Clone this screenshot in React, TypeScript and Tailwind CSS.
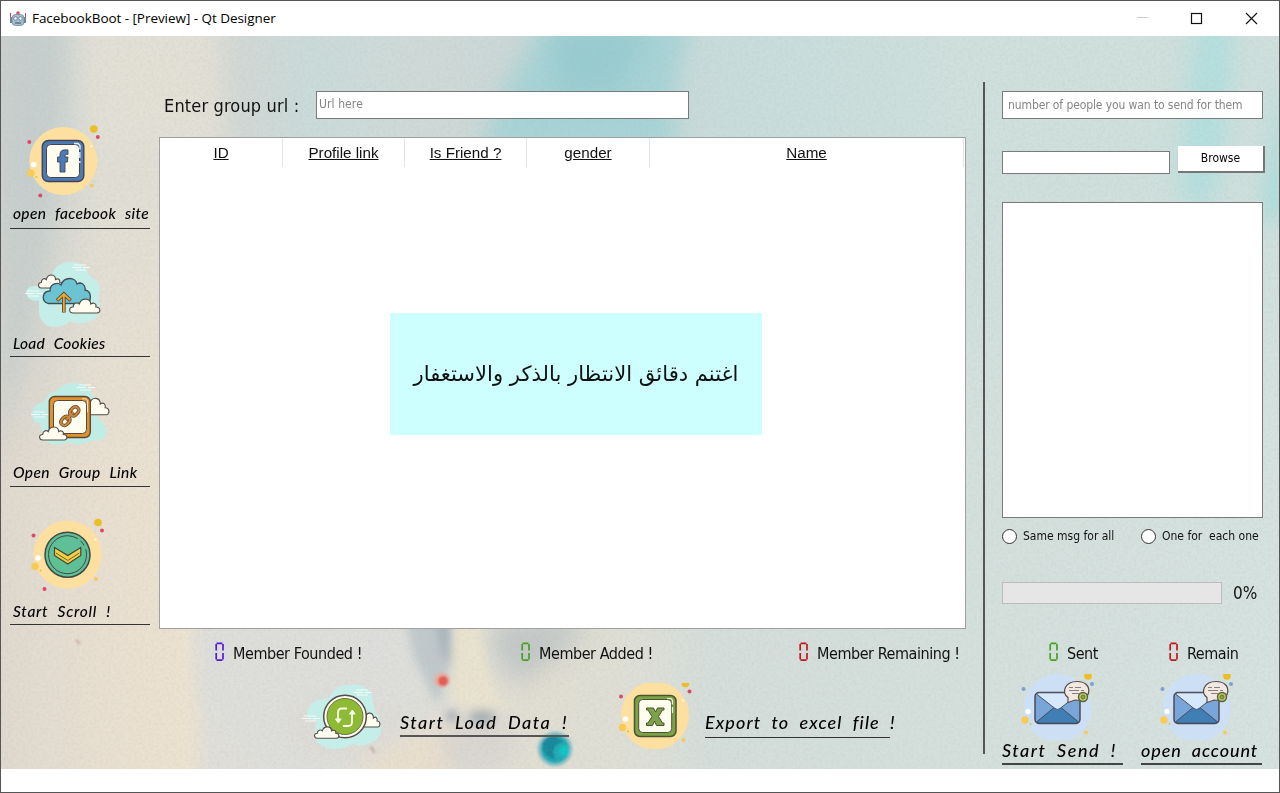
import React from "react";

const tahoma = "font-['DejaVu_Sans_Condensed','DejaVu_Sans',sans-serif] [font-stretch:condensed]";
const script = "font-['Lato',sans-serif] italic font-medium text-black whitespace-pre [word-spacing:5px]";

function Backdrop() {
  return (
    <svg className="absolute inset-0 h-full w-full" viewBox="1 36 1278 733" preserveAspectRatio="none">
      <defs>
        <linearGradient id="base" x1="0" x2="1" y1="0" y2="0">
          <stop offset="0" stopColor="#d0d3cf" />
          <stop offset="0.035" stopColor="#ced5d2" />
          <stop offset="0.08" stopColor="#e0dfd6" />
          <stop offset="0.15" stopColor="#e1dfd6" />
          <stop offset="0.19" stopColor="#d1d8d5" />
          <stop offset="0.24" stopColor="#cadbda" />
          <stop offset="0.33" stopColor="#cfdad8" />
          <stop offset="0.4" stopColor="#cbd8d7" />
          <stop offset="0.6" stopColor="#c8dddc" />
          <stop offset="0.75" stopColor="#cfe0dd" />
          <stop offset="1" stopColor="#cfe0dd" />
        </linearGradient>
        <linearGradient id="low" x1="0" x2="1" y1="0" y2="0">
          <stop offset="0" stopColor="#dfd9cf" />
          <stop offset="0.07" stopColor="#e8dfd1" />
          <stop offset="0.145" stopColor="#ece2d0" />
          <stop offset="0.165" stopColor="#e0dfda" />
          <stop offset="0.3" stopColor="#dfe0dc" />
          <stop offset="0.42" stopColor="#e1ded2" />
          <stop offset="0.5" stopColor="#dedfd6" />
          <stop offset="0.56" stopColor="#d4dedb" />
          <stop offset="1" stopColor="#d5e2df" />
        </linearGradient>
        <linearGradient id="fade" x1="0" x2="0" y1="0" y2="1">
          <stop offset="0.15" stopColor="#000" />
          <stop offset="0.6" stopColor="#fff" />
        </linearGradient>
        <mask id="lowMask"><rect x="0" y="36" width="1280" height="733" fill="url(#fade)" /></mask>
        <filter id="b4" x="-50%" y="-50%" width="200%" height="200%"><feGaussianBlur stdDeviation="5" /></filter>
        <filter id="b12" x="-50%" y="-50%" width="200%" height="200%"><feGaussianBlur stdDeviation="12" /></filter>
        <filter id="b1" x="-50%" y="-50%" width="200%" height="200%"><feGaussianBlur stdDeviation="1.2" /></filter>
        <filter id="grain" x="0" y="0" width="100%" height="100%">
          <feTurbulence type="fractalNoise" baseFrequency="0.35" numOctaves="3" seed="4" />
          <feColorMatrix values="0 0 0 0 0.45  0 0 0 0 0.45  0 0 0 0 0.42  0.9 0 0 0 -0.36" />
        </filter>
      </defs>
      <rect x="0" y="36" width="1280" height="733" fill="url(#base)" />
      <rect x="0" y="36" width="1280" height="733" fill="url(#low)" mask="url(#lowMask)" />
      <g filter="url(#b12)">
        <path d="M0 20h65L58 160 40 300 0 460Z" fill="#c3cccc" opacity=".75" />
        <path d="M80 20h130L225 150H100Z" fill="#e3e0d6" opacity=".8" />
        <path d="M545 20H690L675 90 675 150H480L505 90Z" fill="#a6d3d6" />
        <path d="M550 20H650L620 90 560 100Z" fill="#8fc8cc" opacity=".65" />
        <path d="M1198 20H1232Q1232 130 1212 205H1182Q1180 130 1198 20Z" fill="#aadede" opacity=".8" />
        <path d="M1284 60V220H1266Z" fill="#92dadc" />
      </g>
      <circle cx="330" cy="650" r="138" fill="#dedfdc" opacity=".6" filter="url(#b4)" />
      <g filter="url(#b12)">
        <ellipse cx="345" cy="725" rx="60" ry="35" fill="#dddbd7" />
        <path d="M330 785 450 712 475 735 440 785Z" fill="#eadfcd" />
        <ellipse cx="475" cy="745" rx="38" ry="28" fill="#d9d5d0" />
        <path d="M500 620H590L570 645 520 685 490 650Z" fill="#b0bcc0" opacity=".65" />
      </g>
      <g filter="url(#b4)">
        <path d="M405 620H450V670L437 705 415 660Z" fill="#b5c0c5" opacity=".75" />
        <path d="M436 620H451V665L442 655Z" fill="#9facb5" opacity=".8" />
        <path d="M455 620H478L488 670 500 700 520 706 470 710 450 700Z" fill="#e8e2ce" />
        <circle cx="452" cy="716" r="5" fill="#8d9ca6" />
        <ellipse cx="482" cy="717" rx="13" ry="7" fill="#a4adb3" />
      </g>
      <g filter="url(#b1)">
        <ellipse cx="442" cy="680" rx="8" ry="7.500" fill="#e5b0a6" />
        <ellipse cx="443" cy="681" rx="5" ry="5" fill="#e35a51" />
        <circle cx="555" cy="749" r="17.500" fill="#93c3c9" />
        <circle cx="555" cy="749" r="14.500" fill="#1eaab4" />
        <path d="M542 743q10-14 22 0q-14-1-9 17q-12-3-13-17Z" fill="#167b94" opacity=".75" />
        <circle cx="564" cy="751" r="5" fill="#11c4c5" />
        <path d="M370 747q4 2 4 6M76 640l4 4" stroke="#cbb5ab" strokeWidth="3" />
      </g>
      <rect x="0" y="36" width="1280" height="733" filter="url(#grain)" opacity=".36" />
    </svg>
  );
}

function Cloud({ x, y, w, h, fill = "#fffcf0" }: { x: number; y: number; w: number; h: number; fill?: string }) {
  return (
    <path
      transform={`translate(${x} ${y}) scale(${w / 30} ${h / 16})`}
      d="M4 15C0 15-1 9 4 9C4 5 8 4 10 6C12-1 21 0 21 6C24 4 27 6 26 9C31 9 31 15 27 15Z"
      fill={fill}
      stroke="#564b48"
      strokeWidth="1.1"
      vectorEffect="non-scaling-stroke"
    />
  );
}

/* Soft disc with confetti dots, centred on 0,0 */
function Disc({ blue = false, bottomDot = true }: { blue?: boolean; bottomDot?: boolean }) {
  const dot = blue ? "#7f9fd0" : "#dc4a66";
  return (
    <g>
      <circle r="34" fill={blue ? "#cddff5" : "#fddf9f"} />
      <circle cx="-34" cy="-19" r="2" fill={dot} />
      <circle cx="34.500" cy="-24" r="2" fill={dot} />
      {!blue && bottomDot && <circle cx="-23" cy="34.500" r="2" fill={dot} />}
      <circle cx="30.500" cy="-32" r="3.800" fill="#edbd24" />
      <circle cx="-32.500" cy="12" r="3.800" fill="#f8cb59" />
      <circle cx="-27" cy="16" r="1" fill="#edbd24" />
      <circle cx="28.500" cy="24.500" r="2" fill="#f3ca62" />
      <circle cx="-29.500" cy="3.500" r="2.700" fill="#fff" />
      <circle cx="28" cy="-15" r="1.200" fill="#fff4d6" />
    </g>
  );
}

function Dashes({ x, y }: { x: number; y: number }) {
  return <path transform={`translate(${x} ${y})`} d="M2 0h12M0 2.500h9M11 2.500h7M3 5h11" stroke="#fff" strokeWidth=".8" />;
}

function FacebookIcon() {
  return (
    <svg className="h-[82px] w-[140px]" viewBox="10 120 140 82">
      <g transform="translate(63.3 161)"><Disc /></g>
      <rect x="42.300" y="140.500" width="41.500" height="41" rx="6" fill="#4a7ab8" stroke="#46434f" strokeWidth="1.400" />
      <rect x="46.500" y="144.500" width="33" height="33" rx="4" fill="#fffcf0" stroke="#46434f" strokeWidth="1" />
      <path d="M74 143.500h4l2 2v4M79.800 152v6M79.800 161v2" stroke="#e6f1ff" strokeWidth="1.300" fill="none" />
      <path d="M60 172V162h-2.500v-5H60v-2c0-4.800 3-5.500 8-5v4.500c-2.500-.2-3 .2-3 2.500h3l-.6 5H65v10Z" fill="#4a7ab8" stroke="#46434f" strokeWidth=".9" />
    </svg>
  );
}

function CookiesIcon() {
  return (
    <svg className="h-[82px] w-[140px]" viewBox="10 248 140 82">
      <path d="M39 300Q28 303 26 292Q27 285 38 286Q42 281 50 280Q54 262 71 262Q86 262 89 276Q100 280 100 290Q97 299 100 307Q98 321 87 322Q78 325 70 321Q64 327 53 327Q40 325 39 312Z" fill="#c6eee8" />
      <Dashes x={72} y={265} />
      <Dashes x={25} y={291} />
      <Cloud x={38} y={274} w={25} h={15} />
      <path d="M52 303.500H48C41 301 42 291 50 291C50 283 58 282 61 285C64 276 76 277 77 284C82 281 86 286 85 290C92 291 92 302 86 303.500Z" fill="#6cc4d3" stroke="#414b55" strokeWidth="1.300" />
      <Cloud x={69} y={298} w={31} h={16} />
      <path d="M63.800 312.500V295M57 300.500l6.800-6.500 6.800 6.500" fill="none" stroke="#4f4436" strokeWidth="3.600" />
      <path d="M63.800 312V294M57.500 300l6.300-6 6.300 6" fill="none" stroke="#eda92f" strokeWidth="1.900" />
    </svg>
  );
}

function LinkIcon() {
  return (
    <svg className="h-[82px] w-[140px]" viewBox="10 378 140 82">
      <path d="M49 394Q57 392 60 387Q74 379 87 386Q92 392 97 405Q95 420 106 426Q109 438 99 440Q92 440 87 442Q76 447 70 442Q52 449 43 438L40 423Q33 424 31 413Q36 402 44 402Z" fill="#bfece5" />
      <Dashes x={77} y={385} />
      <Dashes x={31} y={412} />
      <Cloud x={80} y={397} w={29} h={19} />
      <rect x="49.300" y="396.500" width="41" height="41" rx="5.500" fill="#e0922f" stroke="#5c4634" strokeWidth="1.400" />
      <rect x="53.500" y="400.500" width="33" height="33" rx="4" fill="#fffcf0" stroke="#5c4634" strokeWidth="1" />
      <path d="M82 398.800h4l1.500 1.500v12" stroke="#fff4dc" strokeWidth=".8" fill="none" />
      <g transform="translate(69.500 416.500) rotate(-47)" fill="none">
        <g stroke="#6b4a2b" strokeWidth="3.600"><rect x="-11" y="-3.500" width="10" height="7" rx="3.500" /><rect x="2" y="-3.500" width="10" height="7" rx="3.500" /><path d="M-5 0H6" /></g>
        <g stroke="#c98a40" strokeWidth="2"><rect x="-11" y="-3.500" width="10" height="7" rx="3.500" /><rect x="2" y="-3.500" width="10" height="7" rx="3.500" /><path d="M-5 0H6" /></g>
      </g>
      <Cloud x={39} y={426} w={28} h={15} />
    </svg>
  );
}

function ScrollIcon() {
  return (
    <svg className="h-[82px] w-[140px]" viewBox="10 516 140 82">
      <g transform="translate(67.500 554.500)"><Disc /></g>
      <circle cx="67.500" cy="554.700" r="22.500" fill="#5fbf97" stroke="#3e4a46" strokeWidth="1.500" />
      <circle cx="67.500" cy="554.700" r="19" fill="none" stroke="#3e4a46" strokeWidth="1" strokeDasharray="100 3 6 4" />
      <path d="M54.500 547.500l13.300 8 13-8v8l-13 8.500-13.300-8.500Z" fill="#f4cf42" stroke="#40453c" strokeWidth="1.200" />
      <path d="M56 553l11.800 7.500 11.500-7.500" fill="none" stroke="#40453c" strokeWidth=".8" />
    </svg>
  );
}

function RefreshIcon() {
  return (
    <svg className="h-[64px] w-[80px]" viewBox="302 685 80 64">
      <path d="M329 698Q335 685 350 684Q364 683 372 695Q373 705 375 712Q382 718 381 730Q381 739 370 743Q360 748 353 744Q342 751 327 748Q314 744 315 732L317 721Q307 721 307 714Q308 704 317 700Z" fill="#c6eee8" />
      <Dashes x={354} y={690} />
      <Dashes x={302} y={716} />
      <Cloud x={358} y={712} w={22} h={16} />
      <circle cx="345" cy="716.500" r="21.300" fill="#fffcf0" stroke="#564b48" strokeWidth="1.500" />
      <circle cx="345" cy="716.500" r="18" fill="#8fba35" stroke="#66783a" strokeWidth="1" />
      <g fill="none" stroke="#f7faea" strokeWidth="1.800">
        <path d="M347 708.500h-5q-4 0-4 4v9" /><path d="M343 726h5q4 0 4-4v-10" />
      </g>
      <path d="M335.500 719l2.800 4 2.800-4ZM349.500 714l2.800-4 2.800 4Z" fill="#f7faea" stroke="#f7faea" />
      <Cloud x={314} y={726} w={25} h={13} />
    </svg>
  );
}

function ExcelIcon() {
  return (
    <svg className="h-[66px] w-[80px]" viewBox="615 684 80 66">
      <g transform="translate(655 716.500)"><Disc bottomDot={false} /></g>
      <rect x="634.500" y="696.500" width="41.500" height="41" rx="5.500" fill="#7da348" stroke="#49532f" strokeWidth="1.500" />
      <rect x="638.700" y="700.500" width="33" height="33" rx="4" fill="#fffcf0" stroke="#49532f" strokeWidth="1" />
      <path d="M667 699.500h4l1.500 2v4M672.500 708v6" stroke="#e9f5d6" strokeWidth="1.200" fill="none" />
      <path d="M646.500 709h7l2 4 2-4h6.500v2h-1.500l-4 6.500 4 6.500h1.500v2.500h-7.500l-2-4.500-2 4.500h-6V724h1.500l4-6.500-4-6.500h-1.500Z" fill="#7da348" stroke="#49532f" strokeWidth="1" />
    </svg>
  );
}

function MailIcon() {
  return (
    <svg className="h-[66px] w-[80px]" viewBox="1018 674 80 66">
      <g transform="translate(1057.500 708)"><Disc blue /></g>
      <rect x="1035" y="692.500" width="45" height="31" rx="4" fill="#7aa5d8" stroke="#47434f" strokeWidth="1.400" />
      <path d="M1036.500 722l17-14q4-3 8 0l17 14q-2 1.500-4 1.200h-34q-2 0-4-1.200Z" fill="#407fb5" stroke="#47434f" strokeWidth=".9" />
      <path d="M1036.500 694q1-1.200 3-1.200h36q2 0 3 1.200l-18.500 14.500q-2.500 2-5 0Z" fill="#d6e8fb" stroke="#47434f" strokeWidth=".9" />
      <path d="M1068 702.500l0-5C1061 692 1065 681.500 1077 681.500C1086 681.500 1090 687 1088.500 693C1087 699 1081 701 1075 700Z" fill="#efe8e3" stroke="#5b4844" strokeWidth="1.200" />
      <path d="M1069 687.500h4M1075 687.500h6M1069 690.500h10M1081 690.500h3M1072 693.500h7" stroke="#6f6461" strokeWidth=".8" />
      <circle cx="1083" cy="697" r="4.500" fill="#bccc62" stroke="#586137" strokeWidth="1.400" />
      <circle cx="1083" cy="697" r="2" fill="#8aa23f" stroke="#586137" strokeWidth=".7" />
    </svg>
  );
}

/* Seven-segment zero */
function LcdZero({ color }: { color: string }) {
  return (
    <svg className="h-[20px] w-[9px] shrink-0" viewBox="0 0 9 20" fill="none" stroke={color} strokeWidth="1.700">
      <path d="M1.500 1.300h6M1.500 18.200h6M1.200 2v6.500M8 2v6.500M1.200 11V17.500M8 11V17.500" />
    </svg>
  );
}

function Counter({ color, label, className }: { color: string; label: string; className: string }) {
  return (
    <div className={`flex items-start gap-[9px] ${className}`}>
      <LcdZero color={color} />
      <span className={`${tahoma} whitespace-nowrap pt-[1px] text-[16px] leading-[22px] tracking-[-0.44px]`}>{label}</span>
    </div>
  );
}

function SideAction({ icon, label, className, spacing }: { icon: React.ReactNode; label: string; className: string; spacing: string }) {
  return (
    <div className={`flex w-[140px] flex-col justify-end border-b border-[#333] ${className}`}>
      {icon}
      <span className={`${script} block h-[26px] pl-[3px] text-[15.500px] leading-[24px] ${spacing}`}>{label}</span>
    </div>
  );
}

function TitleBar() {
  return (
    <header className="flex h-[35px] shrink-0 items-center bg-white pl-[8px]">
      <svg className="h-4 w-[18px]" viewBox="0 0 18 16">
        <path d="M1.500 2v6M16.500 2v6" stroke="#b04a57" strokeWidth="1" />
        <path d="M2 6v6M16 6v6" stroke="#6f8497" strokeWidth="2" />
        <circle cx="9" cy="2" r="1.800" fill="#d8505c" />
        <rect x="3" y="3.500" width="12" height="11" rx="3.500" fill="#a7bfd3" stroke="#71869a" strokeWidth=".8" />
        <circle cx="6.500" cy="7.500" r="1.800" fill="#e8f3fa" stroke="#586d80" strokeWidth=".7" />
        <circle cx="11.500" cy="7.500" r="1.800" fill="#e8f3fa" stroke="#586d80" strokeWidth=".7" />
        <path d="M6 12h6" stroke="#586d80" strokeWidth="1.400" />
      </svg>
      <span className="ml-[5px] font-['Open_Sans','Noto_Sans',sans-serif] text-[13.500px] tracking-[-0.05px] text-black">FacebookBoot - [Preview] - Qt Designer</span>
      <div className="ml-auto flex items-center pr-[21px]">
        <svg className="h-[13px] w-[122px]" viewBox="1136 11 122 13" fill="none">
          <path d="M1137 16.500h11" stroke="#ccc" />
          <rect x="1191.500" y="12.500" width="10" height="10" stroke="#111" strokeWidth="1.200" />
          <path d="M1246 12l11 11M1257 12l-11 11" stroke="#111" strokeWidth="1.100" />
        </svg>
      </div>
    </header>
  );
}

function Sidebar() {
  return (
    <nav className="flex w-[158px] shrink-0 flex-col pl-[9px]">
      <SideAction icon={<FacebookIcon />} label="open facebook site" className="h-[193px]" spacing="tracking-[0.3px] -mt-px mb-px" />
      <SideAction icon={<CookiesIcon />} label="Load Cookies" className="h-[128px]" spacing="tracking-[0.2px] pt-px" />
      <SideAction icon={<LinkIcon />} label="Open Group Link" className="h-[130px]" spacing="tracking-[0.35px]" />
      <SideAction icon={<ScrollIcon />} label="Start Scroll !" className="h-[138px]" spacing="tracking-[0.7px] pt-px" />
    </nav>
  );
}

const columns = [
  { title: "ID", width: "w-[123px]" },
  { title: "Profile link", width: "w-[122px]" },
  { title: "Is Friend ?", width: "w-[122px]" },
  { title: "gender", width: "w-[123px]" },
  { title: "Name", width: "w-[314px]" },
];

function MainPanel() {
  return (
    <main className="flex w-[824px] shrink-0 flex-col">
      <div className="flex items-start pl-[5px] pt-[55px]">
        <label className={`${tahoma} w-[152px] whitespace-pre pt-[2px] text-[18px] leading-[26px] tracking-[0.15px]`}>Enter group url :</label>
        <div className={`${tahoma} h-[28px] w-[373px] border border-[#7a7a7a] bg-white pl-[2px] text-[12px] leading-[24px] tracking-[0.1px] text-[#858585]`}>Url here</div>
      </div>
      <section className="mt-[18px] flex h-[492px] w-[807px] flex-col border border-[#a0a0a0] bg-white">
        <div className="flex h-[29px] font-['Liberation_Sans',Arial,sans-serif] text-[15.200px] text-[#111]">
          {columns.map((c) => (
            <div key={c.title} className={`flex justify-center border-r border-[#e4e4e4] pt-[3px] leading-[23px] underline ${c.width}`}>{c.title}</div>
          ))}
        </div>
        <div dir="rtl" className="ml-[230px] mt-[146px] flex h-[122px] w-[372px] items-center justify-center bg-[#ccfffd] font-['DejaVu_Sans',sans-serif] text-[21.100px] text-[#111]">
          <span className="whitespace-nowrap">اغتنم دقائق الانتظار بالذكر والاستغفار</span>
        </div>
      </section>
      <div className="mt-[13px] flex h-[24px] pl-[56px]">
        <Counter color="#5519dc" label="Member Founded !" className="w-[306px]" />
        <Counter color="#48a01e" label="Member Added !" className="w-[278px]" />
        <Counter color="#c4161c" label="Member Remaining !" className="w-[170px]" />
      </div>
      <div className="mt-[17px] flex items-start pl-[143px]">
        <div className="pt-[2px]"><RefreshIcon /></div>
        <div className={`${script} ml-[18px] mt-[26px] h-[28px] w-[169px] border-b-2 border-[#555] text-[18px] leading-[26px] tracking-[1.5px]`}>Start Load Data !</div>
        <div className="ml-[46px]"><ExcelIcon /></div>
        <div className={`${script} ml-[10px] mt-[26px] h-[29px] w-[185px] border-b border-[#333] text-[18px] leading-[26px] tracking-[1.1px]`}>Export to excel file !</div>
      </div>
    </main>
  );
}

function Radio({ label }: { label: string }) {
  return (
    <label className="flex items-center gap-[6px]">
      <span className="h-[15px] w-[15px] rounded-full border border-[#333] bg-white" />
      <span className={`${tahoma} whitespace-pre text-[12px]`}>{label}</span>
    </label>
  );
}

function SendPanel() {
  return (
    <aside className="flex w-[262px] flex-col">
      <div className={`${tahoma} mt-[55px] h-[28px] w-[261px] whitespace-nowrap border border-[#7a7a7a] bg-white pl-[5px] text-[12px] leading-[26px] tracking-[-0.1px] text-[#858585]`}>number of people you wan to send for them</div>
      <div className="mt-[27px] flex items-start gap-[8px]">
        <div className="mt-[5px] h-[23px] w-[168px] shrink-0 border border-[#7a7a7a] bg-white" />
        <button className={`${tahoma} h-[27px] w-[87px] shrink-0 border-b-2 border-r-2 border-[#767676] bg-white text-[12px] leading-[25px] text-black`}>Browse</button>
      </div>
      <div className="mt-[28px] h-[316px] w-[261px] border border-[#7a7a7a] bg-white" />
      <div className="mt-[10px] flex h-[16px] items-center">
        <div className="w-[139px]"><Radio label="Same msg for all" /></div>
        <Radio label="One for  each one" />
      </div>
      <div className="mt-[38px] flex items-center">
        <div className="h-[22px] w-[220px] border border-[#bcbcbc] bg-[#e6e6e6]" />
        <span className={`${tahoma} ml-[11px] pt-px text-[17px] leading-[21px]`}>0%</span>
      </div>
      <div className="mt-[38px] flex h-[24px] pl-[47px]">
        <Counter color="#48a01e" label="Sent" className="w-[120px]" />
        <Counter color="#c4161c" label="Remain" className="w-[80px]" />
      </div>
      <div className="mt-[8px] flex gap-[18px]">
        <div className="w-[121px] border-b-2 border-[#444]">
          <div className="pl-[16px]"><MailIcon /></div>
          <div className={`${script} h-[23px] text-[18px] leading-[20px] tracking-[1.5px]`}>Start Send !</div>
        </div>
        <div className="w-[121px] border-b-2 border-[#444]">
          <div className="pl-[16px]"><MailIcon /></div>
          <div className={`${script} h-[23px] text-[18px] leading-[20px] tracking-[0.9px]`}>open account</div>
        </div>
      </div>
    </aside>
  );
}

export default function App() {
  return (
    <div className="flex h-[793px] w-[1280px] flex-col overflow-hidden border border-[#555] bg-white text-[#111]">
      <TitleBar />
      <div className="relative h-[733px] shrink-0">
        <Backdrop />
        <div className="relative flex h-full">
          <Sidebar />
          <MainPanel />
          <div className="mt-[46px] h-[672px] w-[19px] shrink-0 border-l-2 border-[#555]" />
          <SendPanel />
        </div>
      </div>
    </div>
  );
}
